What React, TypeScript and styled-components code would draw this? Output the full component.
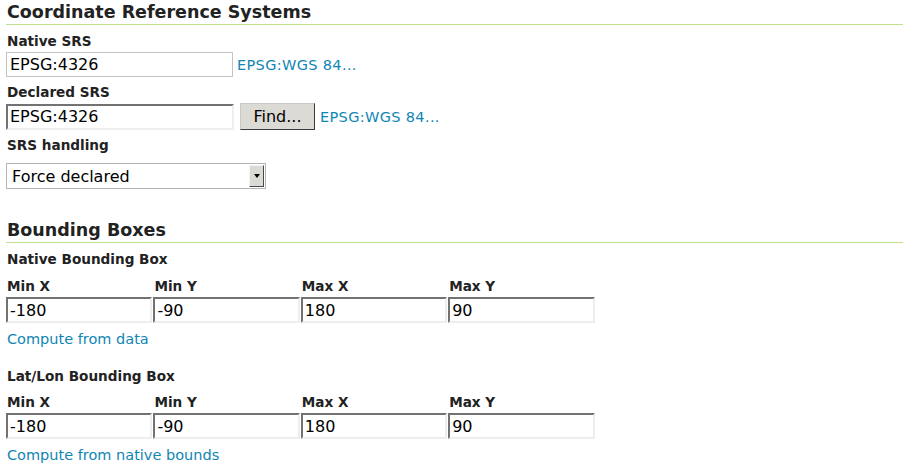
import React from "react";
import styled, { createGlobalStyle } from "styled-components";

const GlobalStyle = createGlobalStyle`
  html, body { margin: 0; padding: 0; background: #ffffff; }
  body { font-family: "DejaVu Sans", Verdana, sans-serif; color: #222222; }
`;

const Page = styled.div`
  padding: 2px 8px 0 6px;
`;

const SectionTitle = styled.h2<{ $top: number }>`
  margin: ${(p) => p.$top}px 0 0;
  padding: 0 0 2px 1px;
  font-size: 17.5px;
  line-height: 20px;
  font-weight: bold;
  color: #222222;
  border-bottom: 1px solid #bfe08f;
`;

const FieldLabel = styled.div<{ $top: number }>`
  margin-top: ${(p) => p.$top}px;
  padding-left: 1px;
  font-size: 13.6px;
  line-height: 16px;
  font-weight: bold;
  color: #222222;
`;

const Row = styled.div<{ $top: number }>`
  margin-top: ${(p) => p.$top}px;
  display: flex;
  align-items: center;
`;

const ReadonlyInput = styled.input`
  box-sizing: border-box;
  width: 227px;
  height: 25px;
  margin: 0;
  padding: 0 3px;
  border: 1px solid #c4c4c4;
  font-family: "DejaVu Sans", sans-serif;
  font-size: 16px;
  color: #000000;
  background: #ffffff;
  outline: none;
`;

const TextInput = styled.input<{ $width?: string }>`
  box-sizing: border-box;
  width: ${(p) => p.$width || "100%"};
  height: 26px;
  margin: 0;
  padding: 0 2px;
  border-style: solid;
  border-width: 2px;
  border-color: #727272 #eeeeee #eeeeee #727272;
  font-family: "DejaVu Sans", sans-serif;
  font-size: 16px;
  color: #000000;
  background: #ffffff;
  outline: none;
`;

const Button = styled.button`
  box-sizing: border-box;
  width: 75px;
  height: 27px;
  margin: 0 0 0 6px;
  padding: 0;
  background: #dcdad5;
  border-style: solid;
  border-width: 1px;
  border-color: #c9c7c2 #3a3a3a #3a3a3a #c9c7c2;
  font-family: "DejaVu Sans", sans-serif;
  font-size: 16px;
  color: #000000;
`;

const Link = styled.a<{ $left?: number; $spaced?: boolean }>`
  margin-left: ${(p) => p.$left || 0}px;
  font-size: 14.5px;
  line-height: 16px;
  letter-spacing: ${(p) => (p.$spaced ? "0.35px" : "0")};
  color: #0f86b4;
  text-decoration: none;
  cursor: pointer;
`;

const BlockLink = styled(Link)<{ $top: number }>`
  display: block;
  margin-top: ${(p) => p.$top}px;
  padding-left: 1px;
  width: max-content;
`;

const SelectBox = styled.div`
  box-sizing: border-box;
  margin-top: 10px;
  width: 260px;
  height: 26px;
  display: flex;
  align-items: center;
  justify-content: space-between;
  border: 1px solid #b4b4b4;
  background: #ffffff;
  padding: 0 1px 0 5px;
`;

const SelectText = styled.span`
  font-size: 16px;
  color: #000000;
`;

const SelectArrow = styled.span`
  box-sizing: border-box;
  width: 15px;
  height: 22px;
  display: flex;
  align-items: center;
  justify-content: center;
  background: #dcdad5;
  border-style: solid;
  border-width: 1px;
  border-color: #f4f3f1 #4a4a4a #4a4a4a #f4f3f1;

  &::after {
    content: "";
    width: 0;
    height: 0;
    border-left: 3.5px solid transparent;
    border-right: 3.5px solid transparent;
    border-top: 4px solid #000000;
  }
`;

const BBoxGrid = styled.div<{ $top: number }>`
  margin-top: ${(p) => p.$top}px;
  display: grid;
  grid-template-columns: repeat(4, 147.4px);
  grid-template-rows: 16px 26px;
  row-gap: 3px;
`;

const BBoxLabel = styled.div`
  padding-left: 1px;
  font-size: 13.6px;
  line-height: 16px;
  font-weight: bold;
  color: #222222;
`;

const BBoxCell = styled.div`
  padding-right: 1px;
`;

const bboxValues = ["-180", "-90", "180", "90"];
const bboxLabels = ["Min X", "Min Y", "Max X", "Max Y"];

function BBox({ top }: { top: number }) {
  return (
    <BBoxGrid $top={top}>
      {bboxLabels.map((l) => (
        <BBoxLabel key={l}>{l}</BBoxLabel>
      ))}
      {bboxValues.map((v, i) => (
        <BBoxCell key={i}>
          <TextInput defaultValue={v} />
        </BBoxCell>
      ))}
    </BBoxGrid>
  );
}

export default function App() {
  return (
    <>
      <GlobalStyle />
      <Page>
        <SectionTitle $top={0}>Coordinate Reference Systems</SectionTitle>
        <FieldLabel $top={8}>Native SRS</FieldLabel>
        <Row $top={3}>
          <ReadonlyInput readOnly defaultValue="EPSG:4326" />
          <Link $left={4} $spaced>EPSG:WGS 84...</Link>
        </Row>
        <FieldLabel $top={7}>Declared SRS</FieldLabel>
        <Row $top={3}>
          <TextInput $width="228px" defaultValue="EPSG:4326" />
          <Button>Find...</Button>
          <Link $left={5} $spaced>EPSG:WGS 84...</Link>
        </Row>
        <FieldLabel $top={7}>SRS handling</FieldLabel>
        <SelectBox>
          <SelectText>Force declared</SelectText>
          <SelectArrow />
        </SelectBox>

        <SectionTitle $top={31}>Bounding Boxes</SectionTitle>
        <FieldLabel $top={8}>Native Bounding Box</FieldLabel>
        <BBox top={11} />
        <BlockLink $top={8}>Compute from data</BlockLink>
        <FieldLabel $top={21}>Lat/Lon Bounding Box</FieldLabel>
        <BBox top={10} />
        <BlockLink $top={8}>Compute from native bounds</BlockLink>
      </Page>
    </>
  );
}
